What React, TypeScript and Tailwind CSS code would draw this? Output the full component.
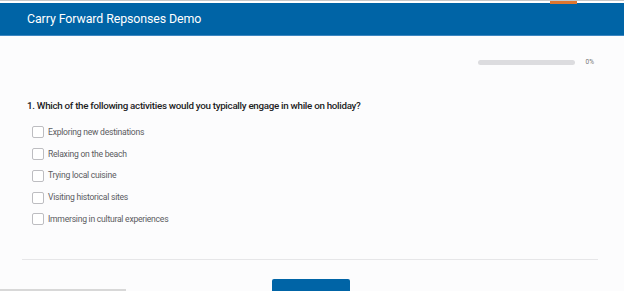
import React from "react";

const options = [
  "Exploring new destinations",
  "Relaxing on the beach",
  "Trying local cuisine",
  "Visiting historical sites",
  "Immersing in cultural experiences",
];

export default function App() {
  return (
    <div className="relative h-[291px] w-[624px] overflow-hidden bg-[#fcfcfd] font-['Roboto',sans-serif]">
      {/* top browser edge */}
      <div className="relative h-[3px] border-t border-[#c8c8c8] bg-white">
        <div className="absolute left-[550px] top-0 h-[3px] w-[27px] bg-[#e0762f]" />
      </div>

      {/* header */}
      <div className="flex h-[33px] items-center border-b border-[#3d86c0] bg-[#0064a6] px-[27px]">
        <h1 className="text-[12.4px] font-normal tracking-[-0.1px] text-white">Carry Forward Repsonses Demo</h1>
      </div>

      {/* progress */}
      <div className="flex items-center justify-end pr-[30px] pt-[22px]">
        <div className="h-[5px] w-[97px] rounded-full bg-[#dcdcdf]" />
        <span className="ml-[11px] text-[6.5px] text-[#777]">0%</span>
      </div>

      {/* question */}
      <div className="px-[27px] pt-[31px]">
        <h2 className="text-[9.8px] font-medium tracking-[-0.3px] text-[#1d1d1d]">
          1. Which of the following activities would you typically engage in while on holiday?
        </h2>
        <ul className="mt-[13px] flex flex-col gap-[9.7px] pl-[5px]">
          {options.map((o) => (
            <li key={o} className="flex h-[12px] items-center">
              <span className="h-[12px] w-[12px] rounded-[2px] border border-[#bdbdc1] bg-white" />
              <span className="ml-[4px] text-[8.6px] tracking-[-0.25px] text-[#5b5b5f]">{o}</span>
            </li>
          ))}
        </ul>
      </div>

      {/* divider */}
      <div className="ml-[22px] mr-[26px] mt-[34px] h-px bg-[#e6e6e8]" />

      {/* next button */}
      <div className="flex justify-center pt-[19px]">
        <button className="ml-[-3px] h-[30px] w-[78px] rounded-[2px] bg-[#0064a6] pt-[7px] text-[9px] font-medium text-white">
          Next Page
        </button>
      </div>

      {/* toast shadow bottom-left */}
      <div className="absolute bottom-0 left-0 h-[2px] w-[126px] bg-[#d8d8d8]" />
    </div>
  );
}
